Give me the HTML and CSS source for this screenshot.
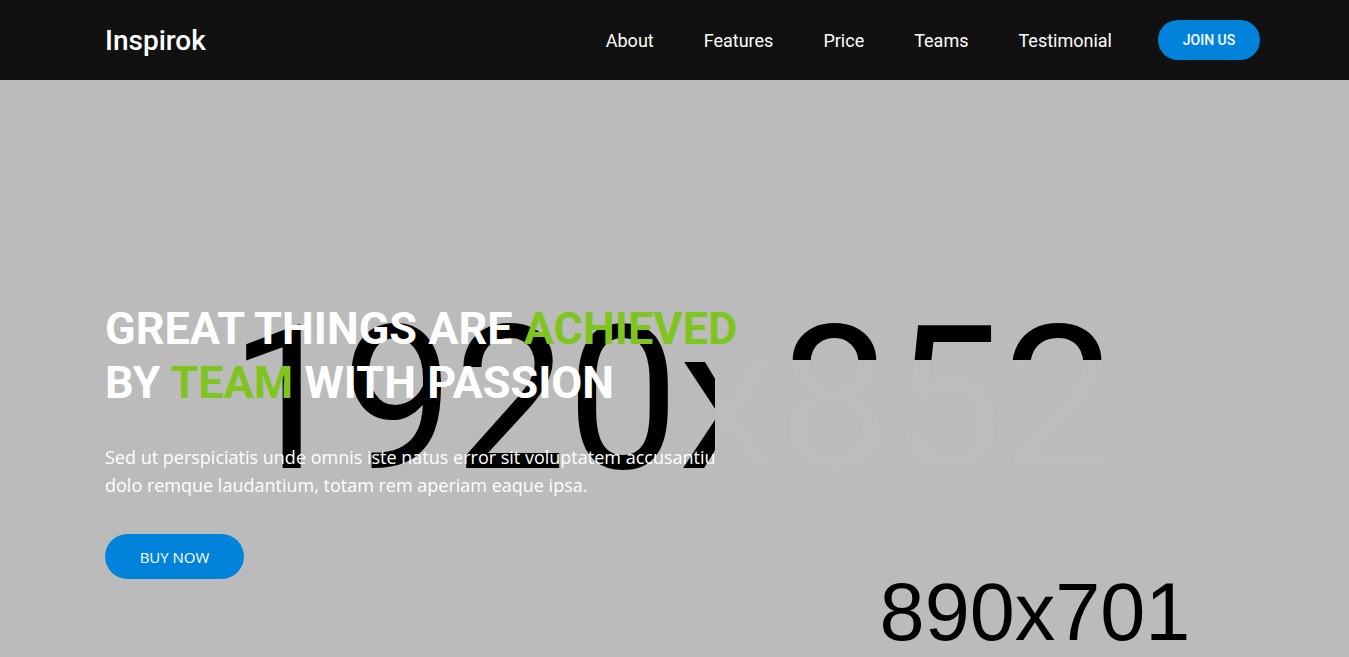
FILE: index.html
```html
<!DOCTYPE html>
<html lang="en">
<head>
<meta charset="utf-8">
<title>Inspirok</title>
<link rel="stylesheet" href="styles.css">
</head>
<body>
<header class="topbar">
  <div class="topbar-inner">
    <a class="logo" href="#">Inspirok</a>
    <nav class="menu">
      <a href="#">About</a>
      <a href="#">Features</a>
      <a href="#">Price</a>
      <a href="#">Teams</a>
      <a href="#">Testimonial</a>
      <a class="join" href="#">JOIN US</a>
    </nav>
  </div>
</header>
<section class="hero">
  <div class="hero-bg" aria-hidden="true">1920x852</div>
  <div class="hero-inner">
    <div class="hero-text">
      <h1 class="headline">GREAT THINGS ARE <span class="accent">ACHIEVED</span><br>BY <span class="accent">TEAM</span> WITH PASSION</h1>
      <p class="lead">Sed ut perspiciatis unde omnis iste natus error sit voluptatem accusantiu<br>dolo remque laudantium, totam rem aperiam eaque ipsa.</p>
      <a class="buy" href="#">BUY NOW</a>
    </div>
    <div class="hero-img">
      <div class="ghost" aria-hidden="true">1920x852</div>
      <span class="img-label">890x701</span>
    </div>
  </div>
</section>
</body>
</html>
```
FILE: styles.css
```css
* { box-sizing: border-box; }
html, body { margin: 0; padding: 0; overflow: hidden; }
body { font-family: Roboto, "Liberation Sans", sans-serif; background: #bbbbbb; }
a { text-decoration: none; color: inherit; }

.topbar { height: 80px; background: #111111; }
.topbar-inner {
  width: 1155px; margin-left: 105px; height: 80px;
  display: flex; align-items: center; justify-content: space-between;
}
.logo { color: #fff; font-family: Roboto, sans-serif; font-weight: 500; font-size: 28px; }
.menu { display: flex; align-items: center; }
.menu a { color: #fff; font-size: 18px; margin-left: 50px; }
.menu a:first-child { margin-left: 1px; }
.menu .join {
  margin-left: 46px; width: 102px; height: 40px; border-radius: 20px;
  background: #0183dc; font-size: 14px; font-weight: 500;
  display: flex; align-items: center; justify-content: center;
}

.hero { position: relative; height: 577px; background: #bbbbbb; overflow: hidden; }
.hero-bg, .ghost {
  position: absolute; width: 1353px;
  text-align: center; font-family: Roboto, sans-serif; font-weight: 400;
  font-size: 200px; line-height: 200px; white-space: nowrap;
}
.hero-bg { left: -4px; top: 220px; color: #000; }
.hero-inner {
  position: relative; padding-left: 105px;
  display: grid; grid-template-columns: 610px 640px; align-items: start;
}
.hero-text { padding-top: 222px; }
.headline {
  margin: 0; color: #fff; font-family: Roboto, sans-serif; font-weight: 700;
  font-size: 45px; line-height: 54px; white-space: nowrap;
}
.accent { color: #80c41f; }
.lead {
  margin: 33px 0 0; color: #fff; font-family: "Open Sans", sans-serif;
  font-size: 18px; line-height: 28px; white-space: nowrap;
}
.buy {
  margin-top: 35px; width: 139px; height: 45px; border-radius: 23px;
  background: #0183dc; color: #fff; font-family: "Open Sans", sans-serif;
  font-size: 15px; font-weight: 500; display: flex; align-items: center; justify-content: center;
}
.hero-img {
  position: relative; overflow: hidden;
  margin-top: 280px; width: 640px; height: 504px; background: #bbbbbb;
  display: flex; align-items: center; justify-content: center;
}
.ghost { left: -719px; top: -60px; color: #bdbdbd; }
.img-label {
  position: relative;
  font-family: "Liberation Sans", Arial, sans-serif; font-size: 81px; color: #000;
}
```
